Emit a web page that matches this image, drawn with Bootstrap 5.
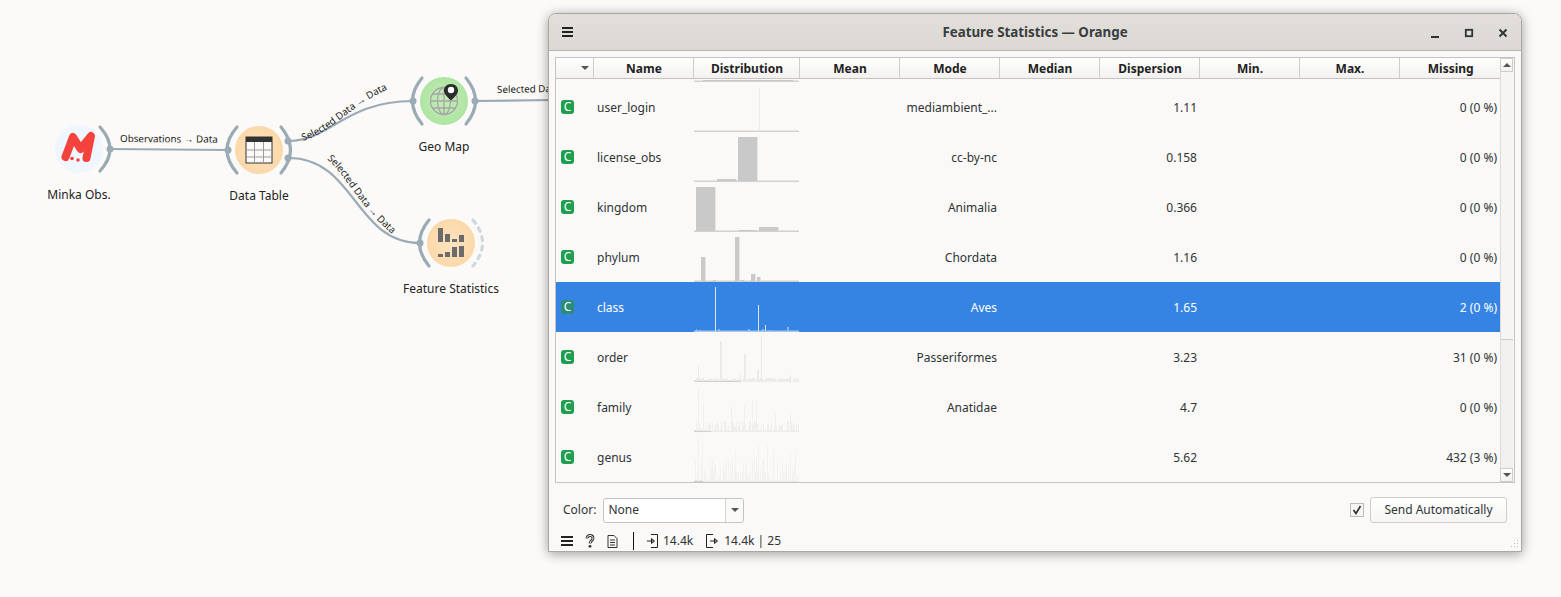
<!DOCTYPE html>
<html lang="en">
<head>
<meta charset="UTF-8">
<title>Feature Statistics — Orange</title>
<link href="https://cdn.jsdelivr.net/npm/bootstrap@5.3.2/dist/css/bootstrap.min.css" rel="stylesheet">
<style>
body { background: #fbfaf8; font-family: "Noto Sans", sans-serif; font-size: 12px; color: #2e3436; overflow: hidden; }
.scheme { position: relative; width: 1561px; height: 597px; }
.scheme-svg { display: block; }
.scheme-svg text { font-family: "Noto Sans", sans-serif; fill: #222; }
.node-name { font-size: 12px; text-anchor: middle; }
.link-name { font-size: 9.8px; }
.wire { fill: none; stroke: #9aabb6; stroke-width: 2.2; }
.arc { fill: none; stroke: #9aabb6; stroke-width: 3.2; stroke-linecap: round; }
.port { fill: #9aabb6; }

.win { position: absolute; left: 548px; top: 13px; width: 974px; height: 539px; background: #faf9f7; border: 1px solid #a9a7a3; border-radius: 8px 8px 0 0; box-shadow: 0 2px 12px rgba(0,0,0,.38); overflow: hidden; }
.win-title { height: 37px; background: linear-gradient(#e2dfdb, #dcd9d4); border-bottom: 1px solid #bcb9b4; padding: 0 1px 0 13px; }
.win-menu { flex: 0 0 90px; }
.win-menu svg { display: block; }
.win-title b { font-size: 13.33px; font-weight: 700; color: #3a3d3f; padding-top: 2px; }
.win-btn { width: 34px; text-align: center; }

.stats { margin: 6px 6px 0 6px; border: 1px solid #c6c4c1; height: 426px; background: #faf9f7; }
.stats-main { width: 944px; }
.ft-table { table-layout: fixed; width: 944px; margin: 0; border-collapse: collapse; }
.ft-table th, .ft-table td { padding: 0; border: 0; background: transparent; color: #2e3436; }
.ft-head th { height: 20px; padding-left: 2px; font-size: 12px; font-weight: 700; text-align: center; color: #222; background: linear-gradient(#fff, #f2f1ef); border-right: 1px solid #d0cecb; border-bottom: 1px solid #c6c4c1; }
.ft-head th:last-child { border-right: 0; }
.sort-mark { display: inline-block; border: 4px solid transparent; border-top: 4px solid #555; border-bottom: 0; margin: 0 0 3px 19px; }
.ft-scroll { height: 404px; overflow: hidden; }
.ft-body { margin-top: -47px !important; }
.ft-body td { height: 50px; font-size: 12px; line-height: 16px; padding: 2px 2px 0 3px; }
.ft-body td.dist { padding: 0; vertical-align: top; }
.ft-body td.num { text-align: right; }
.ft-body td.num-end { padding-right: 3px; }
.ft-body td.mark-cell { padding: 0 0 0 4px; }
.ft-body td.name-cell { padding-left: 4px; }
.ft-body tr.picked td { background: #3584e4; color: #fff; }
.dist svg { display: block; margin-left: 1px; }
.c-mark { display: block; width: 13px; height: 14px; margin-left: 1px; border-radius: 3px; background: #1f9e4f; color: #fff; font-size: 12px; line-height: 14px; text-align: center; }
.picked .c-mark { background: #2b8d76; }

.sbar { width: 13px; background: #f1f0ee; border-left: 1px solid #dddbd8; }
.sbar-btn { height: 14px; background: linear-gradient(#fff, #f2f1ef); border: 1px solid #cfcdca; margin-left: -1px; }
.sbar-thumb { height: 268px; background: #f6f5f3; border-bottom: 1px solid #cfcdca; }
.sbar-gap { flex: 1; }
.tri-up { width: 0; border: 4px solid transparent; border-bottom: 4px solid #555; border-top: 0; }
.tri-down { width: 0; border: 4px solid transparent; border-top: 4px solid #555; border-bottom: 0; }

.ctrl-row { height: 26px; margin: 14px 14px 0 14px; }
.combo { width: 141px; height: 25px; margin-left: 7px; background: #fff; border: 1px solid #c6c4c1; border-radius: 3px; }
.combo-text { padding-left: 4px; }
.combo-arrow { width: 18px; height: 100%; border-left: 1px solid #d6d4d1; background: #fafaf9; border-radius: 0 3px 3px 0; }
.check-box { width: 14px; height: 14px; margin-right: 6px; border: 1px solid #bdbbb8; background: #f6f5f3; }
.send-btn { width: 137px; height: 26px; font-size: 12px; line-height: 1; padding: 0; color: #2e3436; background: linear-gradient(#fff, #f6f5f3); border: 1px solid #cfcdca; border-radius: 3px; }
.status { height: 20px; margin: 8px 0 0 12px; font-size: 12px; }
.status svg { display: block; }
.status-gap { margin-left: 12px; }
.status-sep { width: 1px; height: 18px; background: #111; margin: 0 13px 0 15px; }
.status-num { margin-left: 5px; }
.status-out { margin-left: 13px; }
.status-num2 { margin-left: 6px; }
.grip { position: absolute; right: 2px; bottom: 2px; }
</style>
</head>
<body>
<div class="scheme">
  <svg class="scheme-svg" width="1561" height="597" viewBox="0 0 1561 597">
    <defs>
      <radialGradient id="orangeFill"><stop offset="0" stop-color="#fee4c2"/><stop offset="1" stop-color="#fbd8a8"/></radialGradient>
      <radialGradient id="greenFill"><stop offset="0" stop-color="#c4edb9"/><stop offset="1" stop-color="#aee5a2"/></radialGradient>
      <path id="labelUp" d="M303 141 C335 130 350 105 393 87"/>
      <path id="labelDown" d="M327 159 C346 175 361 210 397 238"/>
    </defs>

    <!-- links -->
    <path class="wire" d="M110 149 C150 149 190 150 228 150"/>
    <path class="wire" d="M289 141 C330 141 345 101 413 101"/>
    <path class="wire" d="M289 158 C355 158 355 243 420 243"/>
    <path class="wire" d="M475 101 L552 100"/>
    <text class="link-name" x="120" y="142" transform="rotate(.4 120 142)">Observations → Data</text>
    <text class="link-name"><textPath href="#labelUp">Selected Data → Data</textPath></text>
    <text class="link-name"><textPath href="#labelDown">Selected Data → Data</textPath></text>
    <text class="link-name" x="497" y="93" transform="rotate(-1 497 93)">Selected Data</text>

    <!-- Minka Obs. -->
    <circle cx="79" cy="149" r="24" fill="#eff6fd"/>
    <path d="M65.500 157 L73 137 L80.500 149 L91 136 L86.500 158" fill="none" stroke="#f4423c" stroke-width="8" stroke-linecap="round" stroke-linejoin="round"/>
    <circle cx="72" cy="158.500" r="1.800" fill="#f4423c"/><circle cx="78" cy="160" r="1.800" fill="#f4423c"/>
    <path class="arc" d="M100 127 Q120 149 100 171"/>
    <circle class="port" cx="110" cy="149" r="3.500"/>
    <text class="node-name" x="79" y="199">Minka Obs.</text>

    <!-- Data Table -->
    <circle cx="259" cy="150" r="24" fill="url(#orangeFill)"/>
    <rect x="246" y="137" width="26" height="26" fill="#fbfaf8" stroke="#333" stroke-width="1"/>
    <rect x="246" y="137" width="26" height="5" fill="#333"/>
    <path d="M246 150 H272 M246 157 H272 M254.500 142 V163 M263.500 142 V163" stroke="#9b9b9b" stroke-width="1"/>
    <path class="arc" d="M237 127 Q217 150 237 173"/>
    <path class="arc" d="M281 127 Q300 150 281 173"/>
    <circle class="port" cx="228" cy="150" r="3.500"/>
    <circle class="port" cx="288" cy="141" r="3.500"/><circle class="port" cx="288" cy="158" r="3.500"/>
    <text class="node-name" x="259" y="200">Data Table</text>

    <!-- Geo Map -->
    <circle cx="444" cy="101" r="24" fill="url(#greenFill)"/>
    <g fill="none" stroke="#a6a6a6" stroke-width="1.300">
      <circle cx="444" cy="101" r="13.500"/>
      <ellipse cx="444" cy="101" rx="6.500" ry="13.500"/>
      <path d="M444 87.500 V114.500 M430.500 101 H457.500 M432.500 94 H455.500 M432.500 108 H455.500"/>
    </g>
    <path d="M451 84 C446.500 84 444 87 444 90.500 C444 94.500 448.500 98 451 100.500 C453.500 98 458 94.500 458 90.500 C458 87 455.500 84 451 84 Z" fill="#2b2b2b"/>
    <circle cx="451" cy="90" r="3.200" fill="#fff"/>
    <path class="arc" d="M422 78 Q403 101 422 124"/>
    <path class="arc" d="M466 78 Q485 101 466 124"/>
    <circle class="port" cx="413" cy="101" r="3.500"/><circle class="port" cx="475" cy="101" r="3.500"/>
    <text class="node-name" x="444" y="151">Geo Map</text>

    <!-- Feature Statistics -->
    <circle cx="451" cy="243" r="24" fill="url(#orangeFill)"/>
    <g fill="#6b6b6b">
      <rect x="438" y="228" width="5" height="14"/><rect x="445" y="234" width="5" height="8"/>
      <rect x="452" y="239" width="5" height="3"/><rect x="459" y="235" width="5" height="7"/>
      <rect x="438" y="254" width="5" height="3"/><rect x="445" y="252" width="5" height="5"/>
      <rect x="452" y="247" width="5" height="10"/><rect x="459" y="246" width="5" height="11"/>
    </g>
    <path class="arc" d="M429 220 Q410 243 429 266"/>
    <circle class="port" cx="420" cy="243" r="3.500"/>
    <path d="M473 220 Q492 243 473 266" fill="none" stroke="#cfd8de" stroke-width="3.200" stroke-linecap="round" stroke-dasharray="4 5.500"/>
    <text class="node-name" x="451" y="293">Feature Statistics</text>
  </svg>

  <div class="win d-flex flex-column">
    <div class="win-title d-flex align-items-center">
      <div class="win-menu"><svg width="11" height="10" viewBox="0 0 11 10"><path d="M0 1H11M0 5H11M0 9H11" stroke="#222" stroke-width="1.800"/></svg></div>
      <b class="flex-grow-1 text-center">Feature Statistics — Orange</b>
      <div class="d-flex">
        <div class="win-btn"><svg width="10" height="10" viewBox="0 0 10 10"><path d="M1 9H9" stroke="#2e3436" stroke-width="2"/></svg></div>
        <div class="win-btn"><svg width="10" height="10" viewBox="0 0 10 10"><rect x="1.800" y="1.800" width="6.400" height="6.400" fill="none" stroke="#2e3436" stroke-width="1.800"/></svg></div>
        <div class="win-btn"><svg width="10" height="10" viewBox="0 0 10 10"><path d="M1.500 1.500L8.500 8.500M8.500 1.500L1.500 8.500" stroke="#2e3436" stroke-width="1.900"/></svg></div>
      </div>
    </div>

    <div class="stats d-flex">
      <div class="stats-main">
        <table class="table ft-table ft-head">
          <colgroup><col style="width:37px"><col style="width:100px"><col style="width:106px"><col style="width:100px"><col style="width:100px"><col style="width:100px"><col style="width:100px"><col style="width:100px"><col style="width:100px"><col style="width:101px"></colgroup>
          <thead><tr><th><span class="sort-mark"></span></th><th>Name</th><th>Distribution</th><th>Mean</th><th>Mode</th><th>Median</th><th>Dispersion</th><th>Min.</th><th>Max.</th><th>Missing</th></tr></thead>
        </table>
        <div class="ft-scroll">
          <table class="table ft-table ft-body">
            <colgroup><col style="width:37px"><col style="width:100px"><col style="width:106px"><col style="width:100px"><col style="width:100px"><col style="width:100px"><col style="width:100px"><col style="width:100px"><col style="width:100px"><col style="width:101px"></colgroup>
            <tbody id="rows"></tbody>
          </table>
        </div>
      </div>
      <div class="sbar d-flex flex-column">
        <div class="sbar-btn d-flex align-items-center justify-content-center"><span class="tri-up"></span></div>
        <div class="sbar-thumb"></div>
        <div class="sbar-gap"></div>
        <div class="sbar-btn d-flex align-items-center justify-content-center"><span class="tri-down"></span></div>
      </div>
    </div>

    <div class="ctrl-row d-flex align-items-center">
      <span>Color:</span>
      <div class="combo d-flex align-items-center">
        <span class="combo-text flex-grow-1">None</span>
        <span class="combo-arrow d-flex align-items-center justify-content-center"><span class="tri-down"></span></span>
      </div>
      <div class="ms-auto d-flex align-items-center">
        <div class="check-box d-flex align-items-center justify-content-center">
          <svg width="10" height="10" viewBox="0 0 10 10"><path d="M1.500 5L4 8.500L8.500 1" fill="none" stroke="#2e3436" stroke-width="1.700"/></svg>
        </div>
        <button type="button" class="btn send-btn">Send Automatically</button>
      </div>
    </div>

    <div class="status d-flex align-items-center">
      <svg width="12" height="10" viewBox="0 0 12 10"><path d="M0 1H12M0 5H12M0 9H12" stroke="#222" stroke-width="1.800"/></svg>
      <svg class="status-gap" width="10" height="14" viewBox="0 0 10 14"><path d="M2 4.500C2 2.700 3.300 1.500 5 1.500S8 2.700 8 4.300C8 6.500 5 6.800 5 9.500" fill="none" stroke="#333" stroke-width="2.800"/><path d="M2 4.500C2 2.700 3.300 1.500 5 1.500S8 2.700 8 4.300C8 6.500 5 6.800 5 9.500" fill="none" stroke="#faf9f7" stroke-width="1"/><circle cx="5" cy="12.300" r="1.400" fill="#333"/></svg>
      <svg class="status-gap" width="11" height="13" viewBox="0 0 11 13"><path d="M1 .500H7L10 3.500V12.500H1Z M3 5H8M3 7.500H8M3 10H8" fill="none" stroke="#333"/></svg>
      <span class="status-sep"></span>
      <svg width="11" height="14" viewBox="0 0 11 14"><path d="M4 .500H10.500V13.500H4 M0 7H7 M4.500 4.500L7.500 7L4.500 9.500Z" fill="none" stroke="#222"/></svg>
      <span class="status-num">14.4k</span>
      <svg class="status-out" width="12" height="14" viewBox="0 0 12 14"><path d="M7 .500H.500V13.500H7 M4 7H11 M8.500 4.500L11.500 7L8.500 9.500Z" fill="none" stroke="#222"/></svg>
      <span class="status-num2">14.4k | 25</span>
    </div>
    <svg class="grip" width="10" height="10" viewBox="0 0 10 10"><path d="M8.500 1V2M8.500 4V5M8.500 7V8M5.500 4V5M5.500 7V8M2.500 7V8" stroke="#bbb"/></svg>
  </div>
</div>

<script>
// table rows: name, mode, dispersion, missing, histogram
const rows = [
  ["", "", "", "", "prev"],
  ["user_login", "mediambient_...", "1.11", "0 (0 %)", "login"],
  ["license_obs", "cc-by-nc", "0.158", "0 (0 %)", "license"],
  ["kingdom", "Animalia", "0.366", "0 (0 %)", "kingdom"],
  ["phylum", "Chordata", "1.16", "0 (0 %)", "phylum"],
  ["class", "Aves", "1.65", "2 (0 %)", "cls"],
  ["order", "Passeriformes", "3.23", "31 (0 %)", "order"],
  ["family", "Anatidae", "4.7", "0 (0 %)", "family"],
  ["genus", "", "5.62", "432 (3 %)", "genus"]
];

// long tail histograms, fixed spikes plus a repeatable bit of noise
function tail(seed, spikes, top) {
  const list = spikes.slice();
  let s = seed;
  for (let x = 1; x < 105; x += 1) {
    s = (s * 73 + 41) % 1009;
    if (s % 3 !== 0) list.push([x, 1, 1 + s % top]);
  }
  return list;
}

// bars are [x, width, height] measured from the cell left and the baseline
const solid = "#c9c9c9";
const bars = {
  prev: { fill: solid, list: [[9, 90, 1]] },
  login: { fill: "#edecea", list: [[65, 1, 43], [80, 1, 1], [94, 1, 1]] },
  license: { fill: solid, list: [[23, 19, 2], [44, 19, 44]] },
  kingdom: { fill: solid, list: [[2, 19, 44], [44, 19, 1], [65, 19, 4]] },
  phylum: { fill: solid, list: [[7, 4, 24], [19, 3, 1], [41, 4, 44], [46, 4, 1], [57, 4, 7], [63, 3, 4]] },
  cls: { fill: "#d9e5f5", list: [[21, 1, 44], [64, 1, 26], [71, 1, 6], [93, 2, 4], [2, 1, 2], [5, 2, 1], [24, 2, 2], [54, 2, 2], [68, 2, 2], [75, 2, 1]] },
  order: { fill: "#eaeae8", list: tail(7, [[4, 1, 15], [26, 2, 40], [50, 2, 27], [67, 1, 44], [63, 2, 11], [46, 1, 8], [96, 1, 6]], 3) },
  family: { fill: "#f0efed", list: tail(17, [[4, 1, 44], [9, 1, 27], [37, 1, 24], [50, 1, 26], [58, 1, 31], [62, 1, 30], [81, 1, 18], [96, 1, 17]], 10) },
  genus: { fill: "#f3f2f0", list: tail(29, [[4, 1, 44], [8, 1, 36], [41, 1, 30], [64, 1, 38], [73, 1, 36], [79, 1, 30], [96, 1, 29], [101, 1, 28]], 24) }
};

const baseInk = { order: 47, family: 17, genus: 9 };

function histogram(key) {
  const h = bars[key];
  const picked = key === "cls";
  let out = '<svg width="106" height="50" viewBox="0 0 106 50">';
  out += '<rect x="0" y="48.500" width="105" height="1.500" fill="' + (baseInk[key] ? "#eeedeb" : picked ? "#a9c6ee" : "#d2d1cf") + '"/>';
  if (baseInk[key]) out += '<rect x="0" y="48.500" width="' + baseInk[key] + '" height="1.500" fill="#d2d1cf"/>';
  h.list.forEach(function (b) {
    const fill = picked && b[2] < 5 ? "#8db4ea" : h.fill;
    out += '<rect x="' + b[0] + '" y="' + (49 - b[2]) + '" width="' + b[1] + '" height="' + b[2] + '" fill="' + fill + '"/>';
    // solid bars have a soft right edge
    if (h.fill === solid && b[2] > 1) out += '<rect x="' + (b[0] + b[1]) + '" y="' + (49 - b[2]) + '" width="1" height="' + b[2] + '" fill="#e6e5e3"/>';
  });
  return out + "</svg>";
}

document.getElementById("rows").innerHTML = rows.map(function (r) {
  const mark = r[0] ? '<span class="c-mark">C</span>' : "";
  return '<tr' + (r[0] === "class" ? ' class="picked"' : "") + '>' +
    '<td class="align-middle mark-cell">' + mark + '</td>' +
    '<td class="align-middle name-cell">' + r[0] + '</td>' +
    '<td class="dist">' + histogram(r[4]) + '</td>' +
    '<td></td>' +
    '<td class="num align-middle">' + r[1] + '</td>' +
    '<td></td>' +
    '<td class="num align-middle">' + r[2] + '</td>' +
    '<td></td><td></td>' +
    '<td class="num num-end align-middle">' + r[3] + '</td></tr>';
}).join("");
</script>
<script src="https://cdn.jsdelivr.net/npm/bootstrap@5.3.2/dist/js/bootstrap.bundle.min.js"></script>
</body>
</html>
